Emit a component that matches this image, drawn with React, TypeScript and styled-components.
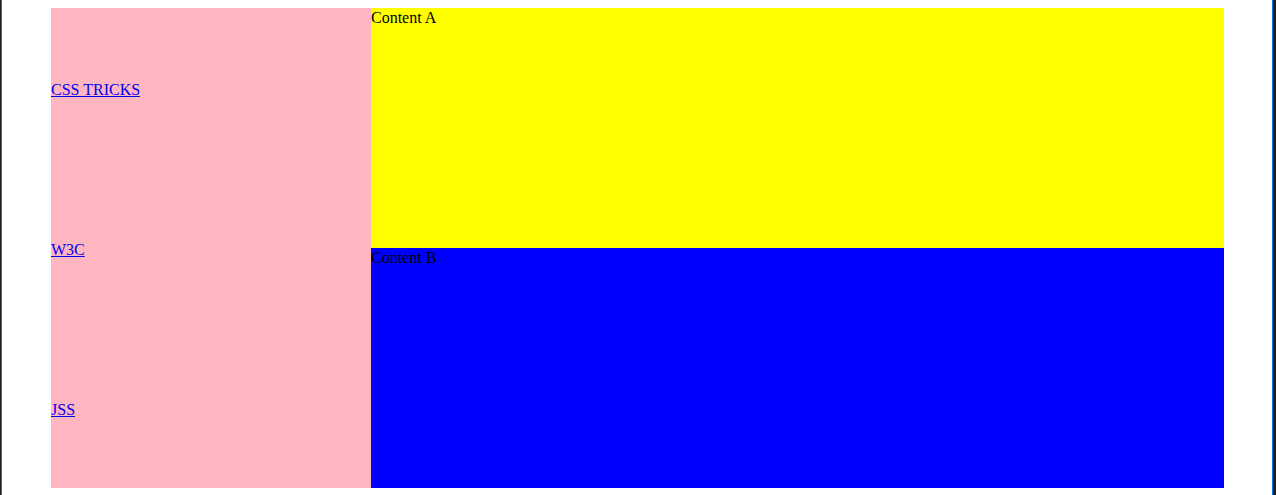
import React from "react";
import styled, { createGlobalStyle } from "styled-components";

const GlobalStyle = createGlobalStyle`
  html, body {
    background: #ffffff;
  }
  body {
    margin: 8px;
    font-family: "Liberation Serif", "Times New Roman", serif;
    font-size: 16px;
    color: #000000;
  }
`;

const WindowFrame = styled.div`
  position: fixed;
  inset: 0;
  pointer-events: none;
  border-left: 1px solid #1e1e1e;
  border-right: 3px solid #1e1e1e;
  &::before {
    content: "";
    position: absolute;
    top: 0;
    bottom: 0;
    left: 0;
    width: 1px;
    background: #0a78d4;
  }
  &::after {
    content: "";
    position: absolute;
    top: 0;
    bottom: 0;
    right: 0;
    width: 1px;
    background: #0a78d4;
  }
`;

const Layout = styled.div`
  width: 1173px;
  height: 480px;
  margin-left: 43px;
  display: grid;
  grid-template-columns: 320px 1fr;
  grid-template-rows: 240px 240px;
`;

const Sidebar = styled.nav`
  grid-row: 1 / span 2;
  background: #ffb6c1;
  display: flex;
  flex-direction: column;
`;

const NavCell = styled.div`
  flex: 1;
  display: flex;
  align-items: center;
  padding-top: 4px;
`;

const NavLink = styled.a`
  color: #0000ee;
  text-decoration: underline;
`;

const Panel = styled.section<{ $bg: string }>`
  background: ${(p) => p.$bg};
  padding-top: 1px;
`;

const links = [
  { label: "CSS TRICKS", href: "#css-tricks" },
  { label: "W3C", href: "#w3c" },
  { label: "JSS", href: "#jss" },
];

export default function App() {
  return (
    <>
      <GlobalStyle />
      <WindowFrame />
      <Layout>
        <Sidebar>
          {links.map((l) => (
            <NavCell key={l.label}>
              <NavLink href={l.href}>{l.label}</NavLink>
            </NavCell>
          ))}
        </Sidebar>
        <Panel $bg="#ffff00">Content A</Panel>
        <Panel $bg="#0000ff">Content B</Panel>
      </Layout>
    </>
  );
}
